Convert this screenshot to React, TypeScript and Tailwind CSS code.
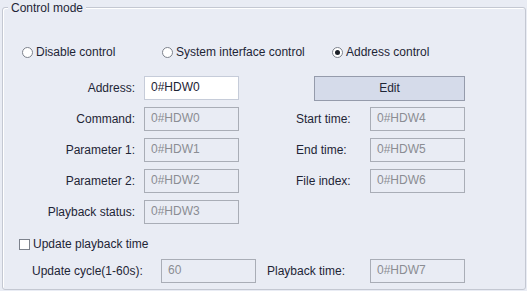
import type { FC, ReactNode } from "react";

const Field: FC<{ value: string; enabled?: boolean }> = ({ value, enabled }) => (
  <div
    className={
      enabled
        ? "w-[95px] h-[24px] shrink-0 border border-[#c6ccd9] bg-white text-[#1c2333] pl-[6px] pt-[3px] leading-[14px]"
        : "w-[95px] h-[24px] shrink-0 border border-[#a9adb6] bg-[#e9ecf4] text-[#8b8d93] pl-[6px] pt-[3px] leading-[14px]"
    }
  >
    {value}
  </div>
);

const Radio: FC<{ checked?: boolean; children: ReactNode; className?: string }> = ({ checked, children, className }) => (
  <div className={"flex items-center " + (className ?? "")}>
    <span className="w-[11px] h-[11px] rounded-full border border-[#7d828c] bg-white flex items-center justify-center mr-[3px]">
      {checked && <span className="w-[5px] h-[5px] rounded-full bg-[#1b1f27]" />}
    </span>
    <span>{children}</span>
  </div>
);

const LeftLabel: FC<{ children: ReactNode }> = ({ children }) => (
  <div className="w-[132px] text-right mr-[9px] shrink-0">{children}</div>
);

const RightLabel: FC<{ children: ReactNode }> = ({ children }) => (
  <div className="w-[74px] ml-[57px] shrink-0">{children}</div>
);

export default function App() {
  return (
    <div
      className="w-[527px] h-[291px] bg-[#e9ecf4] text-[12px] text-[#1e2536] pt-[7px] pl-[2px] overflow-hidden"
      style={{ fontFamily: '"Liberation Sans", Arial, sans-serif' }}
    >
      <div className="relative w-[524px] h-[283px] border border-[#c4c8d2] rounded-[3px] shadow-[inset_1px_1px_0_#ffffff]">
        <span className="absolute left-[5px] top-[-8px] px-[3px] bg-[#e9ecf4] leading-[16px]">Control mode</span>

        <div className="flex items-center h-[16px] mt-[36px] pl-[19px]">
          <Radio className="w-[140px]">Disable control</Radio>
          <Radio className="w-[170px]">System interface control</Radio>
          <Radio checked>Address control</Radio>
        </div>

        <div className="flex flex-col gap-[7px] mt-[16px]">
          <div className="flex items-center h-[24px]">
            <LeftLabel>Address:</LeftLabel>
            <Field value="0#HDW0" enabled />
            <button className="ml-[75px] w-[151px] h-[25px] border border-[#959bab] bg-[#d5dbea] text-[#1e2536]">
              Edit
            </button>
          </div>
          <div className="flex items-center h-[24px]">
            <LeftLabel>Command:</LeftLabel>
            <Field value="0#HDW0" />
            <RightLabel>Start time:</RightLabel>
            <Field value="0#HDW4" />
          </div>
          <div className="flex items-center h-[24px]">
            <LeftLabel>Parameter 1:</LeftLabel>
            <Field value="0#HDW1" />
            <RightLabel>End time:</RightLabel>
            <Field value="0#HDW5" />
          </div>
          <div className="flex items-center h-[24px]">
            <LeftLabel>Parameter 2:</LeftLabel>
            <Field value="0#HDW2" />
            <RightLabel>File index:</RightLabel>
            <Field value="0#HDW6" />
          </div>
          <div className="flex items-center h-[24px]">
            <LeftLabel>Playback status:</LeftLabel>
            <Field value="0#HDW3" />
          </div>
        </div>

        <div className="flex items-center h-[14px] mt-[13px] pl-[16px]">
          <span className="w-[11px] h-[11px] border border-[#7d828c] bg-white mr-[3px]" />
          <span>Update playback time</span>
        </div>

        <div className="flex items-center h-[24px] mt-[8px]">
          <div className="w-[115px] ml-[29px] mr-[14px] shrink-0">Update cycle(1-60s):</div>
          <Field value="60" />
          <div className="w-[103px] ml-[11px] shrink-0">Playback time:</div>
          <Field value="0#HDW7" />
        </div>
      </div>
    </div>
  );
}
